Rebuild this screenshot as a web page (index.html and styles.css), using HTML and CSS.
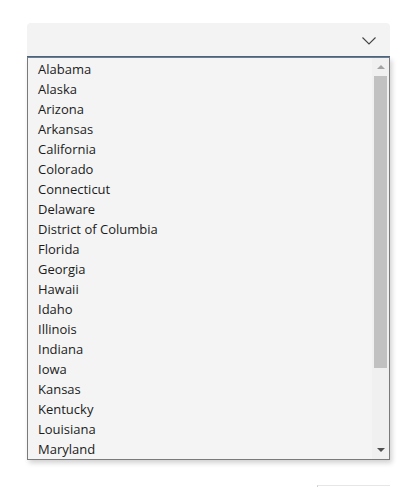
FILE: index.html
```html
<!DOCTYPE html>
<html lang="en">
  <head>
    <meta charset="UTF-8" />
    <title>State picker</title>
    <link rel="stylesheet" href="styles.css">
  </head>
  <body>
    <div class="container">
      <div class="select">
        <svg class="chevron" width="14" height="8" viewBox="0 0 14 8">
          <path d="M0.5 0.5 L7 7 L13.5 0.5" fill="none" stroke="#444" stroke-width="1.1" />
        </svg>
      </div>
      <div class="dropdown">
        <ul class="options">
          <li>Alabama</li>
          <li>Alaska</li>
          <li>Arizona</li>
          <li>Arkansas</li>
          <li>California</li>
          <li>Colorado</li>
          <li>Connecticut</li>
          <li>Delaware</li>
          <li>District of Columbia</li>
          <li>Florida</li>
          <li>Georgia</li>
          <li>Hawaii</li>
          <li>Idaho</li>
          <li>Illinois</li>
          <li>Indiana</li>
          <li>Iowa</li>
          <li>Kansas</li>
          <li>Kentucky</li>
          <li>Louisiana</li>
          <li>Maryland</li>
        </ul>
        <div class="scrollbar">
          <span class="arrow arrow-up"></span>
          <div class="track">
            <div class="thumb"></div>
          </div>
          <span class="arrow arrow-down"></span>
        </div>
      </div>
      <div class="next-field"></div>
    </div>
  </body>
</html>
```

FILE: styles.css
```css
body {
  font-family: "Open Sans", "Noto Sans", sans-serif;
  background-color: #ffffff;
  margin: 0;
  padding: 0;
}
.container {
  padding: 23px 30px 0 27px;
}
.select {
  height: 33px;
  width: 363px;
  background-color: #f3f3f3;
  border-radius: 4px 4px 0 0;
  border-bottom: 1px solid #3c6792;
  position: relative;
}
.chevron {
  position: absolute;
  right: 14px;
  top: 14px;
}
.dropdown {
  display: flex;
  width: 361px;
  height: 401px;
  border: 1px solid #7a7a7a;
  background-color: #f4f4f4;
  box-shadow: 2px 3px 5px rgba(0, 0, 0, 0.18);
}
.options {
  flex: 1;
  list-style: none;
  margin: 0;
  padding: 1px 0 0 10px;
  font-size: 13px;
  color: #1b1b1b;
}
.options li {
  height: 20px;
  line-height: 20px;
  white-space: nowrap;
}
.scrollbar {
  width: 17px;
  background-color: #f0f0f0;
  display: flex;
  flex-direction: column;
  align-items: center;
}
.arrow {
  width: 0;
  height: 0;
  border-left: 4px solid transparent;
  border-right: 4px solid transparent;
}
.arrow-up {
  border-bottom: 4px solid #a3a3a3;
  margin: 7px 0 7px;
}
.arrow-down {
  border-top: 4px solid #505050;
  margin: 6px 0 7px;
}
.track {
  flex: 1;
  width: 100%;
  padding: 0 2px;
  box-sizing: border-box;
}
.thumb {
  height: 292px;
  background-color: #c1c1c1;
}
.next-field {
  margin: 25px 0 0 290px;
  height: 10px;
  border-top: 1px solid #e6e6e6;
  border-left: 1px solid #cfcfcf;
}
```
